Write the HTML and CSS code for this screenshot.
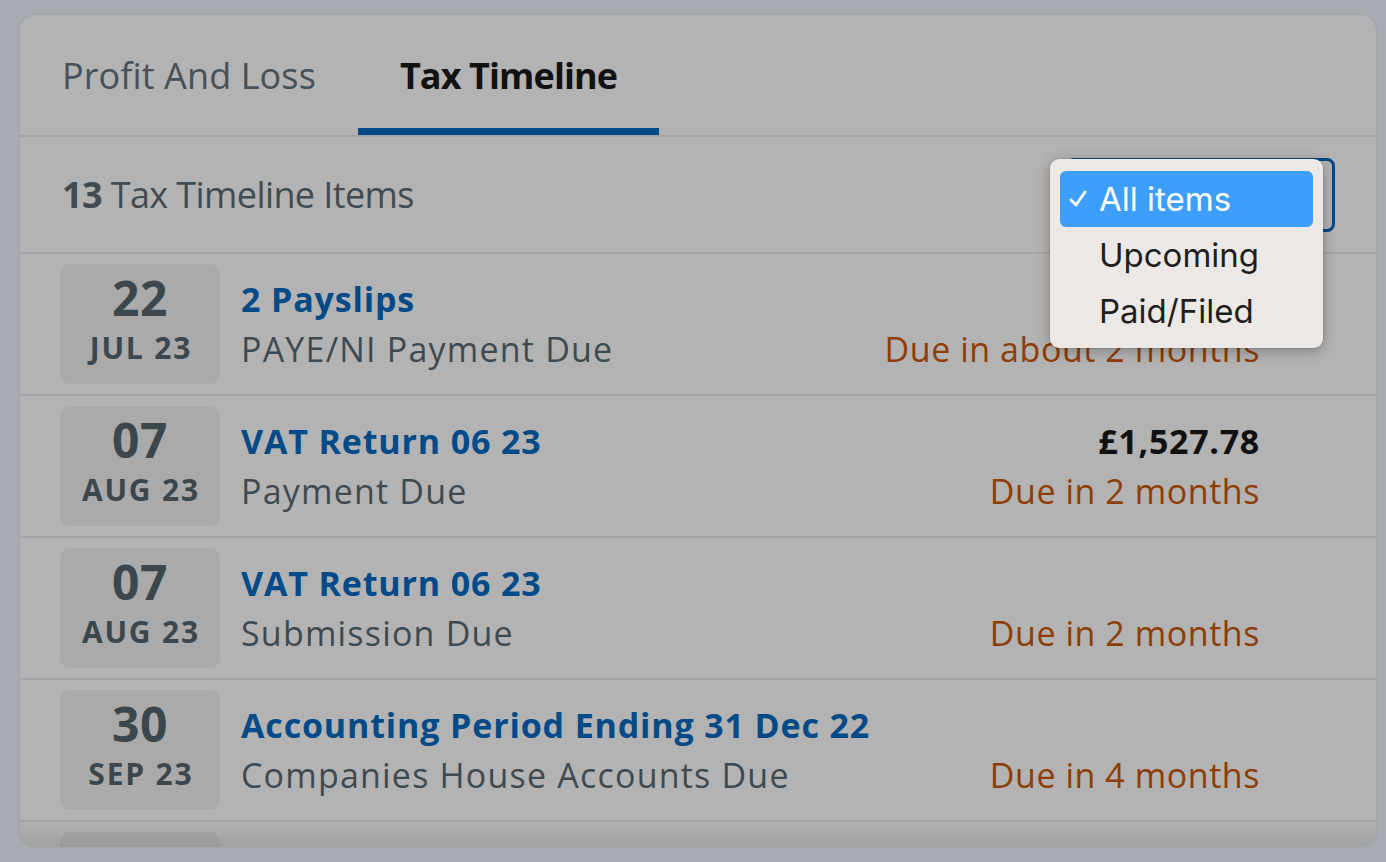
FILE: index.html
```html
<!DOCTYPE html>
<html lang="en">
<head>
<meta charset="utf-8">
<title>Tax Timeline</title>
<link rel="stylesheet" href="styles.css">
</head>
<body>
<div class="card">
  <div class="tabs">
    <div class="tab">Profit And Loss</div>
    <div class="tab active">Tax Timeline</div>
  </div>
  <div class="toolbar">
    <div class="count"><b>13</b> Tax Timeline Items</div>
    <div class="select-wrap">
      <div class="select"></div>
      <div class="menu">
        <div class="item selected"><span class="check"><svg viewBox="0 0 20 20" width="20" height="20"><polyline points="3,11 8,16 17,3" fill="none" stroke="#fff" stroke-width="2.8" stroke-linecap="round" stroke-linejoin="round"/></svg></span>All items</div>
        <div class="item"><span class="check"></span>Upcoming</div>
        <div class="item"><span class="check"></span>Paid/Filed</div>
      </div>
    </div>
  </div>
  <div class="list">
    <div class="row">
      <div class="date"><div class="day">22</div><div class="month">JUL 23</div></div>
      <div class="info"><div class="title">2 Payslips</div><div class="sub">PAYE/NI Payment Due</div></div>
      <div class="right"><div class="amount"></div><div class="due">Due in about 2 months</div></div>
    </div>
    <div class="row">
      <div class="date"><div class="day">07</div><div class="month">AUG 23</div></div>
      <div class="info"><div class="title">VAT Return 06 23</div><div class="sub">Payment Due</div></div>
      <div class="right"><div class="amount">£1,527.78</div><div class="due">Due in 2 months</div></div>
    </div>
    <div class="row">
      <div class="date"><div class="day">07</div><div class="month">AUG 23</div></div>
      <div class="info"><div class="title">VAT Return 06 23</div><div class="sub">Submission Due</div></div>
      <div class="right"><div class="amount"></div><div class="due">Due in 2 months</div></div>
    </div>
    <div class="row">
      <div class="date"><div class="day">30</div><div class="month">SEP 23</div></div>
      <div class="info"><div class="title">Accounting Period Ending 31 Dec 22</div><div class="sub">Companies House Accounts Due</div></div>
      <div class="right"><div class="amount"></div><div class="due">Due in 4 months</div></div>
    </div>
    <div class="row">
      <div class="date"></div>
      <div class="info"></div>
    </div>
  </div>
  <div class="fade"></div>
</div>
</body>
</html>
```

FILE: styles.css
```css
* { box-sizing: border-box; }
html, body { margin: 0; padding: 0; }
body {
  background: #a8acb2;
  font-family: "Open Sans", "Liberation Sans", sans-serif;
  width: 1386px;
  height: 862px;
  overflow: hidden;
}
.card {
  position: relative;
  margin: 13px 0 0 18px;
  width: 1360px;
  height: 836px;
  background: #b3b3b3;
  border: 2px solid #a4a6aa;
  border-radius: 18px;
  overflow: hidden;
}
.tabs {
  display: flex;
  height: 122px;
  border-bottom: 2px solid #a3a4a9;
}
.tab {
  display: flex;
  align-items: center;
  padding: 7px 42px 0;
  border-bottom: 7px solid transparent;
  font-size: 36px;
  letter-spacing: 0.1px;
  color: #475157;
}
.tab.active {
  font-weight: 700;
  letter-spacing: -0.9px;
  color: #121212;
  border-bottom-color: #004a8a;
}
.toolbar {
  display: flex;
  align-items: center;
  justify-content: space-between;
  height: 117px;
  padding: 0 41px 0 42px;
  border-bottom: 2px solid #a3a4a9;
}
.count {
  font-size: 36px;
  letter-spacing: -0.6px;
  color: #414c52;
}
.count b { font-weight: 700; }
.select-wrap {
  position: relative;
}
.select {
  width: 269px;
  height: 74px;
  border: 3px solid #004a8a;
  border-radius: 8px;
}
.menu {
  position: absolute;
  left: -16px;
  top: 1px;
  width: 273px;
  padding: 12px 10px 9px;
  background: #ece8e5;
  border-radius: 9px;
  box-shadow: 0 3px 14px rgba(0,0,0,0.28), 0 0 0 1px rgba(0,0,0,0.08);
  font-family: Inter, "Noto Sans", sans-serif;
  font-size: 33px;
  color: #1f1f1f;
}
.item {
  display: flex;
  align-items: center;
  height: 56px;
  padding-left: 8px;
  border-radius: 6px;
}
.item.selected {
  background: #3d9ffb;
  color: #fff;
}
.check {
  display: flex;
  align-items: center;
  width: 31px;
}
.row {
  display: flex;
  align-items: center;
  height: 142px;
  padding: 10px 116px 10px 40px;
  border-bottom: 2px solid #a3a4a9;
}
.date {
  flex: 0 0 160px;
  height: 120px;
  background: #aaaaaa;
  border-radius: 10px;
  display: flex;
  flex-direction: column;
  align-items: center;
  padding-top: 10px;
  color: #3c474d;
  font-weight: 700;
}
.day {
  font-size: 48px;
  line-height: 48px;
  margin-bottom: 7px;
  letter-spacing: 0.5px;
}
.month {
  font-size: 30px;
  line-height: 37px;
  letter-spacing: 1.8px;
  padding-left: 1.8px;
}
.info {
  flex: 1;
  margin-left: 21px;
  font-size: 34px;
  line-height: 50px;
}
.title {
  font-weight: 700;
  color: #024a88;
  height: 50px;
  letter-spacing: 0.85px;
}
.sub {
  color: #3f4a50;
  letter-spacing: 1.2px;
}
.right {
  text-align: right;
  font-size: 34px;
  line-height: 50px;
}
.amount {
  font-weight: 700;
  color: #111;
  height: 50px;
  letter-spacing: 0.7px;
}
.due {
  color: #8e3d04;
  letter-spacing: 0.55px;
}
.fade {
  position: absolute;
  left: 0;
  right: 0;
  bottom: 0;
  height: 28px;
  background: linear-gradient(to bottom, rgba(0,0,0,0), rgba(0,0,0,0.1));
}
```
